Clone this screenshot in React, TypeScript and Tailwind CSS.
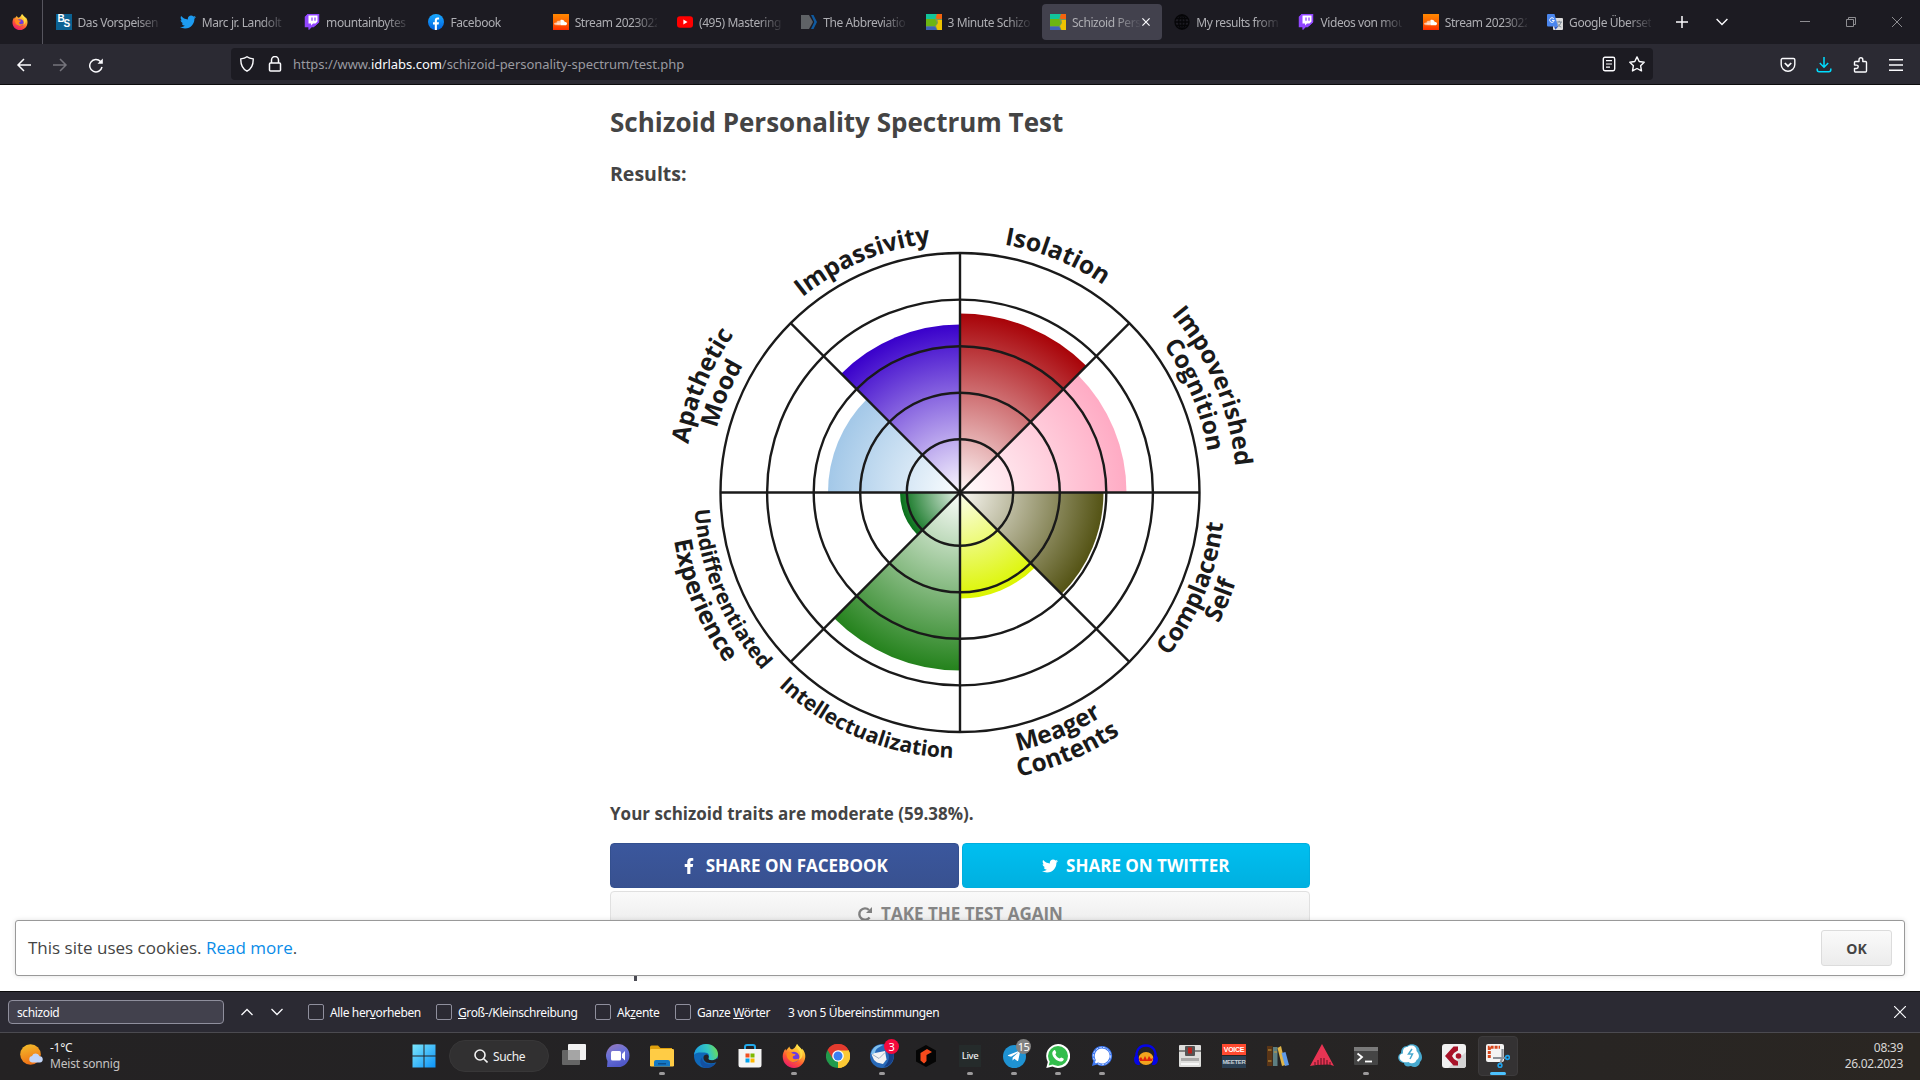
import React from "react";
import type { ReactNode } from "react";
import {
  FaTwitter,
  FaTwitch,
  FaFacebookF,
  FaSoundcloud,
  FaTelegramPlane,
} from "react-icons/fa";

const UI = "font-['Noto_Sans','Open_Sans',sans-serif]";

/* ---------- favicons ---------- */

function Firefox({ size }: { size: number }) {
  return (
    <svg width={size} height={size} viewBox="0 0 24 24">
      <defs>
        <linearGradient id="ffBody" x1="0.8" y1="0" x2="0.25" y2="1">
          <stop offset="0" stopColor="#fff14a" />
          <stop offset="0.35" stopColor="#ffb02e" />
          <stop offset="0.65" stopColor="#ff5634" />
          <stop offset="1" stopColor="#e9166f" />
        </linearGradient>
      </defs>
      <path
        d="M15 0c1 2 4 4 5 6 .2-.6.2-1 0-1.600C22.500 7 23.500 10 23.300 13 22.800 19.200 18 24 12 24 5.600 24 .7 19 .7 12.600c0-3 1.300-6 2.800-7.800 0 .8.200 1.500.5 2C5 5 6.500 4 7.300 2.500c.4 1.500 1.200 2.500 2.700 3C12 5 13.500 3 15 0z"
        fill="url(#ffBody)"
      />
      <circle cx="12" cy="13" r="5.300" fill="#6d3be0" />
      <path d="M4.500 9.500c2-2 4.500-1.500 6 0 1 .5 2.500.3 3 .8-.3 1.500-2 1.700-2.600 2.200-.7 1.500.6 3 2.600 2.800 1.500-.2 2.500-.8 3.500-.3-1.500 2.600-5 3.700-8 2.400-3-1.300-4.700-4.500-4.500-7.900z" fill="#ff8a1f" />
      <path d="M15 0c-1 4 1 5 2.500 7.500C19 10 18.500 14 16.500 16c3.500-1 5-5 3.500-10-1-2-4-4-5-6z" fill="#ffe14a" opacity="0.85" />
    </svg>
  );
}

function BsIcon() {
  return (
    <div className="relative size-4 overflow-hidden bg-[#0b6293] font-['Liberation_Sans',sans-serif] font-bold text-white">
      <span className="absolute left-[2px] top-0 text-[10px] leading-[10px]">B</span>
      <span className="absolute left-[8px] top-[5px] text-[10px] leading-[10px]">S</span>
    </div>
  );
}

function TwitchIcon() {
  return (
    <div className="relative size-4">
      <FaTwitch className="absolute inset-0 text-[#9146ff]" size={16} />
      <svg className="absolute inset-0" width="16" height="16" viewBox="0 0 16 16">
        <path d="M1 3.500 3.500 0H15v8.500L11 12H8.500L5 16v-4H1z" fill="#9146ff" />
        <path d="M4.500 1.500h9v6L11.500 9.500H9L7 11.500v-2H4.500z" fill="#fff" />
        <path d="M8 3.500v3.300M11 3.500v3.300" stroke="#9146ff" strokeWidth="1.300" />
      </svg>
    </div>
  );
}

function FacebookIcon() {
  return (
    <svg width="16" height="16" viewBox="0 0 16 16">
      <defs>
        <linearGradient id="fb" x1="0" y1="0" x2="0" y2="1">
          <stop offset="0" stopColor="#19aaff" />
          <stop offset="1" stopColor="#0062e0" />
        </linearGradient>
      </defs>
      <circle cx="8" cy="8" r="8" fill="url(#fb)" />
      <path d="M6.800 16v-5.500H5V8.200h1.800V6.600c0-2 1-3 2.800-3h1.500v2h-1c-.9 0-1.200.4-1.200 1.200v1.400H11l-.4 2.300H8.900V16z" fill="#fff" />
    </svg>
  );
}

function SoundcloudIcon() {
  return (
    <div className="flex size-4 items-center justify-center bg-linear-to-b from-[#ff8800] to-[#ff2a00] text-white">
      <FaSoundcloud size={13} />
    </div>
  );
}

function YoutubeIcon() {
  return (
    <svg width="16" height="16" viewBox="0 0 16 16">
      <rect x="0" y="2.300" width="16" height="11.400" rx="3" fill="#f00" />
      <path d="M6.400 5.600v4.800L10.500 8z" fill="#fff" />
    </svg>
  );
}

function AbbrevIcon() {
  return (
    <svg width="16" height="16" viewBox="0 0 16 16">
      <path d="M0 1h8l4 7-4 7H0z" fill="#5f6266" />
      <path d="M10 1h2.500l3.500 7-3.500 7H10l3.300-7z" fill="#0f5aa0" />
    </svg>
  );
}

function IdrIcon() {
  return (
    <svg width="16" height="16" viewBox="0 0 16 16">
      <rect width="16" height="16" fill="#7a9a5a" />
      <path d="M0 0h11l-2 5H0z" fill="#12c49a" />
      <path d="M0 5h9l2 4-2 3H0z" fill="#6cb513" />
      <path d="M0 12.500h9L11 16H0z" fill="#3f62b5" />
      <path d="M11 0h5v5h-5L10 3z" fill="#f4640e" />
      <path d="M11.500 6H16v10h-4.500L10 12l2-3z" fill="#edc300" />
    </svg>
  );
}

function GlobeIcon() {
  return (
    <svg width="16" height="16" viewBox="0 0 16 16" fill="none" stroke="#060608" strokeWidth="1.300">
      <circle cx="8" cy="8" r="7" />
      <ellipse cx="8" cy="8" rx="3.300" ry="7" />
      <path d="M1 8h14M8 1v14M2.200 4.500h11.600M2.200 11.500h11.600" />
    </svg>
  );
}

function TranslateIcon() {
  return (
    <svg width="16" height="16" viewBox="0 0 16 16">
      <rect x="6" y="4" width="10" height="12" rx="1" fill="#dcdcdc" />
      <path d="M9.500 8h5.500M12.200 6.800V8M14 8c-.6 2.500-2 4-4 5M10.500 9.500c.8 1.800 2 3 3.800 3.600" stroke="#6f7f8c" strokeWidth="0.900" fill="none" />
      <path d="M1 0h6.500L11 12.500H1a1 1 0 0 1-1-1V1a1 1 0 0 1 1-1z" fill="#4a86ee" />
      <path d="M7 12.500h4L8.500 15.800z" fill="#2a56c4" />
      <path d="M6.800 4.600A2.300 2.300 0 1 0 7.300 6.400H5" stroke="#fff" strokeWidth="1" fill="none" />
    </svg>
  );
}

type TabData = { icon: ReactNode; label: string; active?: boolean };

const tabs: TabData[] = [
  { icon: <BsIcon />, label: "Das Vorspeisen" },
  { icon: <FaTwitter size={16} color="#1d9bf0" />, label: "Marc jr. Landolt" },
  { icon: <TwitchIcon />, label: "mountainbytes" },
  { icon: <FacebookIcon />, label: "Facebook" },
  { icon: <SoundcloudIcon />, label: "Stream 2023022" },
  { icon: <YoutubeIcon />, label: "(495) Mastering" },
  { icon: <AbbrevIcon />, label: "The Abbreviatio" },
  { icon: <IdrIcon />, label: "3 Minute Schizo" },
  { icon: <IdrIcon />, label: "Schizoid Pers", active: true },
  { icon: <GlobeIcon />, label: "My results from" },
  { icon: <TwitchIcon />, label: "Videos von mou" },
  { icon: <SoundcloudIcon />, label: "Stream 2023022" },
  { icon: <TranslateIcon />, label: "Google Überset" },
];

function Tab({ icon, label, active }: TabData) {
  return (
    <div className="flex w-[124.300px] shrink-0 px-[2px] py-1">
      <div className={`flex h-9 w-full items-center rounded-[4px] pl-[8px] ${active ? "bg-[#42414d]" : ""}`}>
        <div className="size-4 shrink-0">{icon}</div>
        <div
          className={`ml-[6px] mt-[2px] overflow-hidden whitespace-nowrap text-[12px] tracking-[-0.420px] text-[#aeaeb3] ${
            active
              ? "w-[70px] [mask-image:linear-gradient(to_right,black_60%,transparent_100%)]"
              : "w-[82px] [mask-image:linear-gradient(to_right,black_72%,transparent_104%)]"
          }`}
        >
          {label}
        </div>
        {active && (
          <svg width="8" height="8" viewBox="0 0 8 8" stroke="#fbfbfe" strokeWidth="1.200">
            <path d="M.4.400l7.200 7.200M7.600.400.400 7.600" />
          </svg>
        )}
      </div>
    </div>
  );
}

function TabBar() {
  return (
    <div className="flex h-11 bg-[#1c1b22]">
      <div className="flex w-[43px] items-center justify-center border-r border-[#56555e] pl-[0px] pr-[3px]">
        <Firefox size={16} />
      </div>
      <div className="flex w-[1618.500px] pl-[2.500px]">
        {tabs.map((t, i) => (
          <Tab key={i} {...t} />
        ))}
      </div>
      <div className="flex flex-1 items-center pl-[14px] text-white">
        <svg width="12" height="12" viewBox="0 0 12 12" stroke="#fbfbfe" strokeWidth="1.500">
          <path d="M6 0v12M0 6h12" />
        </svg>
        <svg className="ml-7" width="12" height="8" viewBox="0 0 12 8" fill="none" stroke="#fbfbfe" strokeWidth="1.400">
          <path d="M.6 1 6 6.500 11.400 1" />
        </svg>
        <div className="ml-auto flex items-center gap-[36px] pr-[18px]">
          <svg width="10" height="10" viewBox="0 0 10 10" stroke="#8d8d91">
            <path d="M0 4.500h10" />
          </svg>
          <svg width="10" height="10" viewBox="0 0 10 10" fill="none" stroke="#8d8d91">
            <path d="M.5 2.500h7v7h-7zM2.500 2.500v-2h7v7h-2" />
          </svg>
          <svg width="10" height="10" viewBox="0 0 10 10" stroke="#8d8d91">
            <path d="M0 0l10 10M10 0 0 10" />
          </svg>
        </div>
      </div>
    </div>
  );
}

function NavBar() {
  const s = "#fbfbfe";
  return (
    <div className="flex h-[41px] border-b border-[#0c0c0d] bg-[#2b2a33] pb-[3px] pt-1">
      <div className="flex w-[231px] items-center gap-5 pl-4">
        <svg width="16" height="16" viewBox="0 0 16 16" fill="none" stroke={s} strokeWidth="1.500">
          <path d="M15 8H2M8 2 2 8l6 6" />
        </svg>
        <svg width="16" height="16" viewBox="0 0 16 16" fill="none" stroke="#75747c" strokeWidth="1.500">
          <path d="M1 8h13M8 2l6 6-6 6" />
        </svg>
        <svg width="16" height="16" viewBox="0 0 16 16" fill="none" stroke={s} strokeWidth="1.500">
          <path d="M14 10A6.200 6.200 0 1 1 12.500 4.500" />
          <path d="M14.800 1.500v5.300H9.500z" fill={s} stroke="none" />
        </svg>
      </div>
      <div className="flex h-8 w-[1422px] items-center rounded-[4px] bg-[#1c1b22] pl-2 pr-2">
        <svg width="16" height="16" viewBox="0 0 16 16" fill="none" stroke={s} strokeWidth="1.400">
          <path d="M8 .8c2 1.700 4 2 6.200 2.100.2 5.500-1.500 9.800-6.200 12.300C3.300 12.700 1.600 8.400 1.800 2.900 4 2.800 6 2.500 8 .8z" />
        </svg>
        <svg className="ml-3" width="16" height="16" viewBox="0 0 16 16" fill="none" stroke={s} strokeWidth="1.500">
          <rect x="2.500" y="7" width="11" height="8" rx="1" />
          <path d="M4.500 7V4a3.500 3.500 0 0 1 7 0v3" />
        </svg>
        <div className="ml-[10px] mt-[2px] whitespace-nowrap text-[13px] tracking-[-0.040px] text-[#9a9aa0]">
          https://www.<span className="text-[#fbfbfe]">idrlabs.com</span>/schizoid-personality-spectrum/test.php
        </div>
        <svg className="ml-auto" width="16" height="16" viewBox="0 0 16 16" fill="none" stroke={s} strokeWidth="1.400">
          <rect x="2.300" y="1.300" width="11.400" height="13.400" rx="1.600" />
          <path d="M5 4.700h6M5 8h6M5 11.200h4" strokeWidth="1.200" />
        </svg>
        <svg className="ml-3" width="16" height="16" viewBox="0 0 16 16" fill="none" stroke={s} strokeWidth="1.400" strokeLinejoin="round">
          <path d="M8 .9l2.200 4.600 5 .7-3.600 3.500.9 5.200L8 12.500l-4.500 2.400.9-5.200L.8 6.200l5-.7z" />
        </svg>
      </div>
      <div className="flex flex-1 items-center justify-end gap-5 pr-4">
        <svg width="16" height="16" viewBox="0 0 16 16" fill="none" stroke={s} strokeWidth="1.400">
          <path d="M2.500 1.500h11a1.300 1.300 0 0 1 1.300 1.300V7.500a6.800 6.800 0 0 1-13.600 0V2.800a1.300 1.300 0 0 1 1.300-1.300z" />
          <path d="M4.800 6 8 9.200 11.200 6" strokeWidth="1.700" />
        </svg>
        <svg width="16" height="16" viewBox="0 0 16 16" fill="none" stroke="#00ddff" strokeWidth="1.500">
          <path d="M8 0v10M3.800 6 8 10.200 12.200 6M1.200 11.500v1.300a2 2 0 0 0 2 2h9.600a2 2 0 0 0 2-2v-1.300" />
        </svg>
        <svg width="16" height="16" viewBox="0 0 16 16" fill="none" stroke={s} strokeWidth="1.400" strokeLinejoin="round">
          <path d="M7 4.500V2.700a1.900 1.900 0 0 1 3.800 0v1.800h2.700a1 1 0 0 1 1 1V14a1 1 0 0 1-1 1H3.500a1 1 0 0 1-1-1v-2.500h2a1.700 1.700 0 0 0 0-3.400h-2V5.500a1 1 0 0 1 1-1z" />
        </svg>
        <svg width="16" height="16" viewBox="0 0 16 16" stroke={s} strokeWidth="1.500">
          <path d="M1 2.700h14M1 8h14M1 13.200h14" />
        </svg>
      </div>
    </div>
  );
}

/* ---------- result chart ---------- */

const R = 239.5;
const rings = [53.2, 99.8, 146.3, 192.9, R];

const wedges = [
  { start: 0, r: 179, inner: "#fdf3f3", outer: "#a80308" },
  { start: 45, r: 166.5, inner: "#fffafb", outer: "#ffabc4" },
  { start: 90, r: 143.5, inner: "#f6f4ee", outer: "#545314" },
  { start: 135, r: 106, inner: "#fcfee8", outer: "#dcf500" },
  { start: 180, r: 178, inner: "#f8fbf7", outer: "#24821c" },
  { start: 225, r: 60, inner: "#e6f1e8", outer: "#08701a" },
  { start: 270, r: 132, inner: "#f9fcfe", outer: "#a3c8e8" },
  { start: 315, r: 168, inner: "#f6f3fd", outer: "#3900cb" },
];

const labels = [
  { text: "Isolation", r: 252, a: 22.4, size: 24.7 },
  { text: "Impoverished", r: 276.5, a: 67.2, size: 24.4 },
  { text: "Cognition", r: 251, a: 67.4, size: 24.2 },
  { text: "Complacent", r: 265, a: 112.4, size: 24.4, low: true },
  { text: "Self", r: 290, a: 112.4, size: 24.4, low: true },
  { text: "Meager", r: 265, a: 157.5, size: 24.4, low: true },
  { text: "Contents", r: 290, a: 157.4, size: 24.5, low: true },
  { text: "Intellectualization", r: 265.5, a: 202.3, size: 21.1, low: true },
  { text: "Undifferentiated", r: 266, a: 247.2, size: 21.1, low: true },
  { text: "Experience", r: 290, a: 247.2, size: 24.5, low: true },
  { text: "Apathetic", r: 276, a: 292.5, size: 24.6 },
  { text: "Mood", r: 251.500, a: 292.6, size: 24.4 },
  { text: "Impassivity", r: 251, a: 337.2, size: 24.6 },
];

function polar(r: number, deg: number) {
  const t = (deg * Math.PI) / 180;
  return `${(r * Math.sin(t)).toFixed(2)} ${(-r * Math.cos(t)).toFixed(2)}`;
}

function Chart() {
  return (
    <svg className="block" width="700" height="580" viewBox="-350 -282.500 700 580">
      <defs>
        {wedges.map((w, i) => (
          <radialGradient key={i} id={`w${i}`} gradientUnits="userSpaceOnUse" cx="0" cy="0" r={w.r}>
            <stop offset="0.020" stopColor={w.inner} />
            <stop offset="1" stopColor={w.outer} />
          </radialGradient>
        ))}
        {labels.map((l, i) => (
          <path
            key={i}
            id={`arc${i}`}
            d={
              l.low
                ? `M${polar(l.r, l.a + 40)}A${l.r} ${l.r} 0 0 0 ${polar(l.r, l.a - 40)}`
                : `M${polar(l.r, l.a - 40)}A${l.r} ${l.r} 0 0 1 ${polar(l.r, l.a + 40)}`
            }
          />
        ))}
      </defs>
      {wedges.map((w, i) => (
        <path key={i} d={`M0 0L${polar(w.r, w.start)}A${w.r} ${w.r} 0 0 1 ${polar(w.r, w.start + 45)}Z`} fill={`url(#w${i})`} />
      ))}
      <g fill="none" stroke="#1a1a1a" strokeWidth="2.400">
        {rings.map((r) => (
          <circle key={r} r={r} />
        ))}
        {[0, 45, 90, 135].map((a) => (
          <path key={a} d={`M${polar(R, a)}L${polar(R, a + 180)}`} />
        ))}
      </g>
      <g className="font-['Open_Sans',sans-serif] font-bold" fill="#1a1a1a" textAnchor="middle">
        {labels.map((l, i) => (
          <text key={i} fontSize={l.size}>
            <textPath href={`#arc${i}`} startOffset="50%">
              {l.text}
            </textPath>
          </text>
        ))}
      </g>
    </svg>
  );
}

function Page() {
  return (
    <div className="relative h-[906px] overflow-hidden bg-white font-['Open_Sans',sans-serif] text-[#444]">
      <div className="mx-auto w-[700px]">
        <h1 className="pt-[19px] text-[26px] font-bold leading-9 whitespace-nowrap">Schizoid Personality Spectrum Test</h1>
        <h2 className="pt-[20px] text-[19.500px] font-bold leading-7">Results:</h2>
        <div className="mt-[22px]">
          <Chart />
        </div>
        <p className="mt-3 text-[17px] font-bold leading-6">Your schizoid traits are moderate (59.38%).</p>
        <div className="mt-[17px] grid h-[45px] grid-cols-2 gap-[3px] text-[17px] font-bold text-white">
          <div className="flex items-center justify-center gap-[9px] rounded-[4px] border border-[#34508f] bg-linear-to-b from-[#3b579d] to-[#385190]">
            <FaFacebookF size={16} />
            SHARE ON FACEBOOK
          </div>
          <div className="flex items-center justify-center gap-2 rounded-[4px] border border-[#00aede] bg-linear-to-b from-[#00bff0] to-[#00b0e0]">
            <FaTwitter size={16} />
            SHARE ON TWITTER
          </div>
        </div>
        <div className="mt-[3px] flex h-[45px] items-center justify-center gap-2 rounded-[4px] border border-[#e0e0e0] bg-linear-to-b from-[#fafafa] to-[#e9e9e9] text-[17px] font-bold text-[#858585]">
          <svg width="16" height="16" viewBox="0 0 16 16" fill="none" stroke="#808080" strokeWidth="2.400">
            <path d="M12.600 11.500A5.700 5.700 0 1 1 12 4" />
            <path d="M15 1v6H9z" fill="#808080" stroke="none" />
          </svg>
          TAKE THE TEST AGAIN
        </div>
        <div className="ml-[24px] mt-[39px] h-[6px] w-[3px] bg-[#4c4c55]" />
      </div>
      <div className="absolute left-[15px] top-[835px] flex h-[56px] w-[1890px] items-center rounded-[3px] border border-[#999] bg-white pl-3 pr-3 text-[17px] shadow-[0_0_5px_rgba(0,0,0,0.120)]">
        <span className="-mt-px">
          This site uses cookies. <span className="text-[#0a8ce8]">Read more</span>.
        </span>
        <div className="ml-auto flex h-9 w-[71px] items-center justify-center rounded-[3px] border border-[#dcdcdc] bg-linear-to-b from-[#fafafa] to-[#ececec] text-[14px] font-bold">
          OK
        </div>
      </div>
    </div>
  );
}

/* ---------- find bar ---------- */

function Check({ className, children }: { className: string; children: ReactNode }) {
  return (
    <div className={`flex shrink-0 items-center gap-[6px] whitespace-nowrap ${className}`}>
      <div className="size-4 rounded-[2px] border border-[#8f8f9d]" />
      <span className="mt-[2px]">{children}</span>
    </div>
  );
}

function FindBar() {
  return (
    <div className="flex h-[42px] items-center border-b border-t border-b-[#4b4a50] border-t-[#0c0c0d] bg-[#2b2a33] pl-2 text-[12px] tracking-[-0.380px] text-[#fbfbfe]">
      <div className="flex h-6 w-[216px] items-center rounded-[4px] border border-[#8f8f9d] bg-[#42414d] pl-2 pt-[2px]">schizoid</div>
      <svg className="ml-[17px]" width="12" height="8" viewBox="0 0 12 8" fill="none" stroke="#fbfbfe" strokeWidth="1.300">
        <path d="M.5 7 6 1.500 11.500 7" />
      </svg>
      <svg className="ml-[18px]" width="12" height="8" viewBox="0 0 12 8" fill="none" stroke="#fbfbfe" strokeWidth="1.300">
        <path d="M.5 1 6 6.500 11.500 1" />
      </svg>
      <Check className="ml-[25px] w-[128px]">
        Alle her<u>v</u>orheben
      </Check>
      <Check className="w-[159px]">
        <u>G</u>roß-/Kleinschreibung
      </Check>
      <Check className="w-[80px]">
        Ak<u>z</u>ente
      </Check>
      <Check className="w-[113px]">
        Ganze <u>W</u>örter
      </Check>
      <span className="mt-[2px]">3 von 5 Übereinstimmungen</span>
      <svg className="ml-auto mr-[14px]" width="12" height="12" viewBox="0 0 12 12" stroke="#fbfbfe" strokeWidth="1.200">
        <path d="M0 0l12 12M12 0 0 12" />
      </svg>
    </div>
  );
}

/* ---------- taskbar ---------- */

const T = (children: ReactNode) => (
  <svg width="24" height="24" viewBox="0 0 24 24">
    {children}
  </svg>
);

type AppEntry = { icon: ReactNode; run?: boolean; badge?: string; badgeClass?: string; active?: boolean };

const apps: AppEntry[] = [
  {
    icon: T(
      <>
        <rect x="6" y="0" width="18" height="16" rx="1" fill="#f2f2f2" />
        <rect x="0" y="6" width="18" height="15" rx="1" fill="#6d6d6d" opacity="0.900" />
        <rect x="6" y="6" width="12" height="10" fill="#a5a5a5" />
      </>,
    ),
  },
  {
    icon: T(
      <>
        <defs>
          <linearGradient id="chat" x1="0" y1="0" x2="0.400" y2="1">
            <stop offset="0" stopColor="#9a78b8" />
            <stop offset="0.500" stopColor="#6a72d8" />
            <stop offset="1" stopColor="#5058c8" />
          </linearGradient>
        </defs>
        <path d="M12 0a11.500 11.500 0 1 1 0 23H1l.5-6A11.500 11.500 0 0 1 12 0z" fill="url(#chat)" />
        <rect x="5" y="7" width="10" height="9.500" rx="1.500" fill="#fff" />
        <path d="M16 10l3-3v9.500l-3-3z" fill="#fff" />
      </>,
    ),
  },
  {
    run: true,
    icon: T(
      <>
        <path d="M0 3a1.500 1.500 0 0 1 1.500-1.500H8L10.500 4H22v6H0z" fill="#e0a00c" />
        <rect x="0" y="5" width="24" height="17.500" rx="1.300" fill="#ffcc45" />
        <path d="M4 22.500V18a2 2 0 0 1 2-2h12a2 2 0 0 1 2 2v4.500z" fill="#1479c4" />
        <rect x="8" y="19" width="8" height="1.500" fill="#0c4f8c" />
      </>,
    ),
  },
  {
    icon: T(
      <>
        <defs>
          <linearGradient id="edge" x1="0" y1="0.500" x2="1" y2="0.300">
            <stop offset="0" stopColor="#1b9de2" />
            <stop offset="0.600" stopColor="#35c8c0" />
            <stop offset="1" stopColor="#6fdc50" />
          </linearGradient>
        </defs>
        <circle cx="12" cy="12" r="12" fill="#0f68b8" />
        <path d="M0 11C1 4 6 0 12 0c7 0 12 5 12 10 0 4-3 6.300-6.500 6.300-2.500 0-3.500-1-3-2.300 1.500-2.500 0-5.500-4-5.500C6 8.500 1.500 8 0 11z" fill="url(#edge)" />
        <path d="M8 13.500c0 5 5 8.500 13.500 6C19 23 15.500 24 12 24c-5-.5-7.500-7-4-10.500z" fill="#1450a0" />
        <path d="M14.500 14c-.5 1.300.5 2.300 3 2.300 2 0 4-.6 5.500-2 1.500 1 1.500 2.500-.5 4-7 2.500-13.500.2-13-5 .2-2 2-3 4-2.600 1 .6 1.500 2 1 3.300z" fill="#242325" />
      </>,
    ),
  },
  {
    icon: T(
      <>
        <path d="M7 6V3a2 2 0 0 1 2-2h6a2 2 0 0 1 2 2v3" stroke="#22a9ea" strokeWidth="2" fill="none" />
        <path d="M0.500 5h23v16a2.500 2.500 0 0 1-2.500 2.500H3A2.500 2.500 0 0 1 .5 21z" fill="#f4f4f4" />
        <path d="M7.500 9.500h4v4h-4z" fill="#f05022" />
        <path d="M12.500 9.500h4v4h-4z" fill="#7eb900" />
        <path d="M7.500 14.500h4v4h-4z" fill="#00a3ee" />
        <path d="M12.500 14.500h4v4h-4z" fill="#feb800" />
      </>,
    ),
  },
  { run: true, icon: <Firefox size={24} /> },
  {
    icon: T(
      <>
        <path d="M12 12 1.600 6A12 12 0 0 1 22.400 6z" fill="#e33b2e" />
        <path d="M12 12 22.400 6A12 12 0 0 1 12 24z" fill="#fcc934" />
        <path d="M12 12v12A12 12 0 0 1 1.600 6z" fill="#229a4c" />
        <path d="M12 6.500h10.700A12 12 0 0 0 1.600 6l5 8.500z" fill="#e33b2e" />
        <path d="M16.800 14.700 12 24A12 12 0 0 0 22.700 6.500H12z" fill="#fcc934" />
        <circle cx="12" cy="12" r="5.800" fill="#fff" />
        <circle cx="12" cy="12" r="4.500" fill="#3a7ff0" />
      </>,
    ),
  },
  {
    run: true,
    badge: "3",
    badgeClass: "bg-[#f5083c]",
    icon: T(
      <>
        <circle cx="12" cy="12" r="12" fill="#2869b8" />
        <path d="M1 10C2 4 7 0 13 1c-3 2-8 3-8 9z" fill="#7fc0ee" />
        <path d="M1.500 10.500 5 9l10-2 1.500 8.500L13 20l-6-1.500-3-2.500z" fill="#f4f4f4" />
        <path d="M2.500 10.500l6.500 4 6-6" stroke="#9fb0c4" strokeWidth="1" fill="none" />
        <path d="M17 8c3 3 3 9-3 15 7-1 11-8 9.500-15z" fill="#173f86" />
      </>,
    ),
  },
  {
    icon: T(
      <>
        <path d="M12 1l10 5.500v11L12 23 2 17.500v-11z" fill="#050505" />
        <path d="M6.500 9l6.500-4 5 3-5.500 3v6l-2.500 2.500-3.500-3z" fill="#f5491c" />
      </>,
    ),
  },
  {
    run: true,
    icon: (
      <div className="flex size-[22px] items-center justify-center bg-[#252b2b] text-[9.500px] font-medium tracking-[-0.400px] text-[#eee]">Live</div>
    ),
  },
  {
    run: true,
    badge: "15",
    badgeClass: "bg-[#828282]",
    icon: (
      <div className="flex size-[23px] items-center justify-center rounded-full bg-[#1f92d2] text-white">
        <FaTelegramPlane size={14} />
      </div>
    ),
  },
  {
    run: true,
    icon: T(
      <>
        <path d="M12 0a12 12 0 1 1-5.500 22.600L.3 24l1.500-6A12 12 0 0 1 12 0z" fill="#fff" />
        <circle cx="12" cy="12" r="10" fill="#33bd4c" />
        <path d="M2.700 21.500 4 16.500l3.800 3.800z" fill="#33bd4c" />
        <path d="M8 6.200c.6-.3 1-.2 1.300.4l.9 2c.2.500-.8 1.400-.8 1.800.9 1.900 2.200 3.100 4.200 4 .5.100 1.200-1.200 1.700-1l2.100 1c.5.300.4 1 .1 1.600-.9 1.500-2.600 1.800-4.300 1.200-3.200-1-6.200-4-6.900-7.300-.2-1.500.6-3 1.700-3.700z" fill="#fff" />
      </>,
    ),
  },
  {
    run: true,
    icon: T(
      <>
        <path d="M12 2a10 10 0 1 1-5 18.600L2 22l1.300-5A10 10 0 0 1 12 2z" fill="#3b76f0" />
        <circle cx="12" cy="12" r="8.700" fill="none" stroke="#c9daff" strokeWidth="1" strokeDasharray="2.500 1.300" />
        <path d="M12 4.500a7.500 7.500 0 1 1-3.600 14L5 19.300l.8-3.400A7.500 7.500 0 0 1 12 4.500z" fill="#fff" />
      </>,
    ),
  },
  {
    icon: T(
      <>
        <ellipse cx="12" cy="14.500" rx="7.500" ry="6.500" fill="#f3a51e" />
        <path d="M5 15l2-2 2 3 2-4 2 4 2-4 2 3 2-1-1 3H6z" fill="#e0230c" />
        <path d="M2.500 15C1.500 6 5.500 1.500 12 1.500S22.500 6 21.500 15" stroke="#0505e6" strokeWidth="2.400" fill="none" />
        <path d="M0 15c0-3 2-4 4-4l2 10C2 21.500 0 19 0 15zM24 15c0-3-2-4-4-4l-2 10c4 .5 6-2 6-6z" fill="#0505e6" />
      </>,
    ),
  },
  {
    icon: T(
      <>
        <rect x="1" y="1" width="22" height="22" rx="1" fill="#dededc" />
        <path d="M1 7h22" stroke="#666" strokeWidth="1.500" />
        <rect x="7" y="2" width="10" height="10" rx="1" fill="#555" />
        <rect x="10" y="3.500" width="4" height="6" fill="#b8221c" />
        <path d="M4 14v3M6 14v3M8 14v3M10 14v3M12 14v3M14 14v3M16 14v3M18 14v3M20 14v3" stroke="#777" strokeWidth="1" />
        <rect x="3" y="19" width="18" height="2" fill="#f6f6f6" />
      </>,
    ),
  },
  {
    icon: (
      <div className="w-6 font-['Liberation_Sans',sans-serif] font-bold tracking-[-0.300px] text-white">
        <div className="flex h-[11px] items-center justify-center bg-[#ff4a30] text-[7px] leading-[9px]">VOICE</div>
        <div className="mt-[1px] flex h-3 items-center justify-center bg-[#2b3f52] text-[6px] leading-[9px] text-[#c8d0d8]">MEETER</div>
      </div>
    ),
  },
  {
    icon: T(
      <>
        <rect x="1" y="2" width="5.500" height="20" fill="#5a3516" />
        <rect x="7" y="3" width="4.500" height="19" fill="#5d7f82" />
        <path d="M2 6h3.500M2 17h3.500M8 8h3" stroke="#c99c3c" />
        <path d="M11.500 4l3.500-2 4.500 19-3.500 1z" fill="#e0b548" />
        <path d="M15.500 9l4-1 3.500 13-4 1z" fill="#5f9be8" />
      </>,
    ),
  },
  {
    icon: T(
      <>
        <path d="M12 0 24 22c-2-1-4-1.500-6-1.500-4 0-8 .3-12 .5-2 .2-4 .6-6 1z" fill="#e83453" />
        <path d="M5 21v-3M8 21v-5M11 21v-7M14 21v-7M17 21v-5M20 21v-3" stroke="#5b1020" strokeWidth="1" />
      </>,
    ),
  },
  {
    run: true,
    icon: T(
      <>
        <rect x="0" y="3" width="24" height="18" rx="1" fill="#454545" />
        <rect x="0" y="3" width="24" height="4" fill="#7a7a7a" />
        <path d="M3.500 9.500 8 13l-4.500 4" stroke="#fff" strokeWidth="1.800" fill="none" />
        <path d="M11 17.500h7" stroke="#fff" strokeWidth="1.800" />
      </>,
    ),
  },
  {
    icon: T(
      <>
        <path d="M9 2c4-4 13-1 12.500 5 3.500 4 3 9 .5 11-.5 5-6 6-9 4-4 1-7 0-7-3-6-1-8-7-3-10 0-4 2-7 6-7z" fill="#47a9cf" />
        <path d="M9.500 3c3.500-3 9.500-1 9 4 3 3 3.500 7 0 9-1 4-6 4-8 2-5 1-9-1-9-5 0-2 1.500-3.500 3.500-3.500C4.500 5 6.500 3 9.500 3z" fill="#fff" />
        <path d="M14 5l-3.500 5h4L12 15" stroke="#47a9cf" strokeWidth="1.500" fill="none" />
      </>,
    ),
  },
  {
    icon: T(
      <>
        <rect width="24" height="24" rx="3" fill="#f1f1f1" />
        <path d="M24 8v13a3 3 0 0 1-3 3H6z" fill="#d4d4d4" />
        <path d="M11.500 2.500H16v4L12 9l-2 3 2 3 4 2.500v4h-4.500L3 12z" fill="#a81229" />
        <circle cx="16.500" cy="12" r="2.800" fill="#a81229" />
      </>,
    ),
  },
  {
    active: true,
    icon: T(
      <>
        <rect x="0" y="0" width="18" height="18" rx="2" fill="#f3f3f3" />
        <path d="M3.300 14V3.300H14" stroke="#d6451b" strokeWidth="3" strokeDasharray="3 1" fill="none" />
        <path d="M16.500 5v8l-2 6" stroke="#8a9097" strokeWidth="2.200" fill="none" />
        <path d="M7 14h12" stroke="#8a9097" strokeWidth="2" />
        <circle cx="21.500" cy="13.500" r="1.900" fill="none" stroke="#1fa4ee" strokeWidth="1.600" />
        <circle cx="14" cy="21.500" r="1.900" fill="none" stroke="#1fa4ee" strokeWidth="1.600" />
      </>,
    ),
  },
];

function TaskIcon({ icon, run, badge, badgeClass, active }: AppEntry) {
  return (
    <div className="flex w-11 justify-center">
      <div
        className={`relative flex h-10 w-10 items-center justify-center rounded-[4px] ${
          active ? "border border-[#3d3b3c] bg-[#343233]" : ""
        }`}
      >
        {icon}
        {badge && (
          <span
            className={`absolute right-[3px] top-[3px] flex h-[15px] w-[15px] items-center justify-center rounded-full text-[11px] leading-none tracking-[-0.500px] text-white ${badgeClass}`}
          >
            {badge}
          </span>
        )}
        {run && <span className="absolute bottom-[1px] h-[3px] w-[6px] rounded-full bg-[#9c9a9b]" />}
        {active && <span className="absolute bottom-0 h-[3px] w-4 rounded-full bg-[#4cc2ff]" />}
      </div>
    </div>
  );
}

function Taskbar() {
  return (
    <div className="flex h-[47px] items-start bg-linear-to-r from-[#242223] via-[#242325] to-[#2a2622] pt-[3px] text-[12px] text-[#f2f2f2]">
      <div className="flex w-[402px] pl-[20px] pt-0">
        <svg className="mt-[8px]" width="24" height="22" viewBox="0 0 24 22">
          <defs>
            <linearGradient id="sun" x1="0" y1="0" x2="0.300" y2="1">
              <stop offset="0" stopColor="#f3c12c" />
              <stop offset="1" stopColor="#f07316" />
            </linearGradient>
          </defs>
          <circle cx="10.500" cy="10.500" r="10.300" fill="url(#sun)" />
          <path d="M12 18.500a3.300 3.300 0 0 1 0-6.500 4 4 0 0 1 7.500.3 3.100 3.100 0 0 1 .3 6.200z" fill="#c3d6f8" />
        </svg>
        <div className="ml-[6px] mt-[4px] leading-4 tracking-[-0.250px]">
          <div>-1°C</div>
          <div className="text-[#c4c2c2] tracking-[-0.200px]">Meist sonnig</div>
        </div>
      </div>
      <div className="flex h-10 w-11 items-center justify-center">
        <svg width="24" height="24" viewBox="0 0 24 24">
          <defs>
            <linearGradient id="win" x1="0" y1="0" x2="1" y2="1">
              <stop offset="0" stopColor="#7be6fb" />
              <stop offset="1" stopColor="#0c93f8" />
            </linearGradient>
          </defs>
          <path d="M.5.500h11v11H.5zM12.500.500h11v11h-11zM.5 12.500h11v11H.5zM12.500 12.500h11v11h-11z" fill="url(#win)" />
        </svg>
      </div>
      <div className="ml-[3px] mt-1 flex h-8 w-[100px] items-center rounded-full border border-[#383738] bg-[#313031] pl-6">
        <svg width="14" height="14" viewBox="0 0 14 14" fill="none" stroke="#f2f2f2" strokeWidth="1.600">
          <circle cx="6" cy="6" r="5" />
          <path d="M9.700 9.700 13.500 13.500" />
        </svg>
        <span className="ml-[5px] mt-[2px] tracking-[-0.350px]">Suche</span>
      </div>
      <div className="ml-[3px] flex">
        {apps.map((a, i) => (
          <TaskIcon key={i} {...a} />
        ))}
      </div>
      <div className="ml-auto pr-[17px] pt-[4px] text-right leading-4 tracking-[-0.300px] text-[#d8d6d5]">
        <div>08:39</div>
        <div>26.02.2023</div>
      </div>
    </div>
  );
}

export default function App() {
  return (
    <div className={`h-[1080px] w-[1920px] overflow-hidden ${UI}`}>
      <TabBar />
      <NavBar />
      <Page />
      <FindBar />
      <Taskbar />
    </div>
  );
}
